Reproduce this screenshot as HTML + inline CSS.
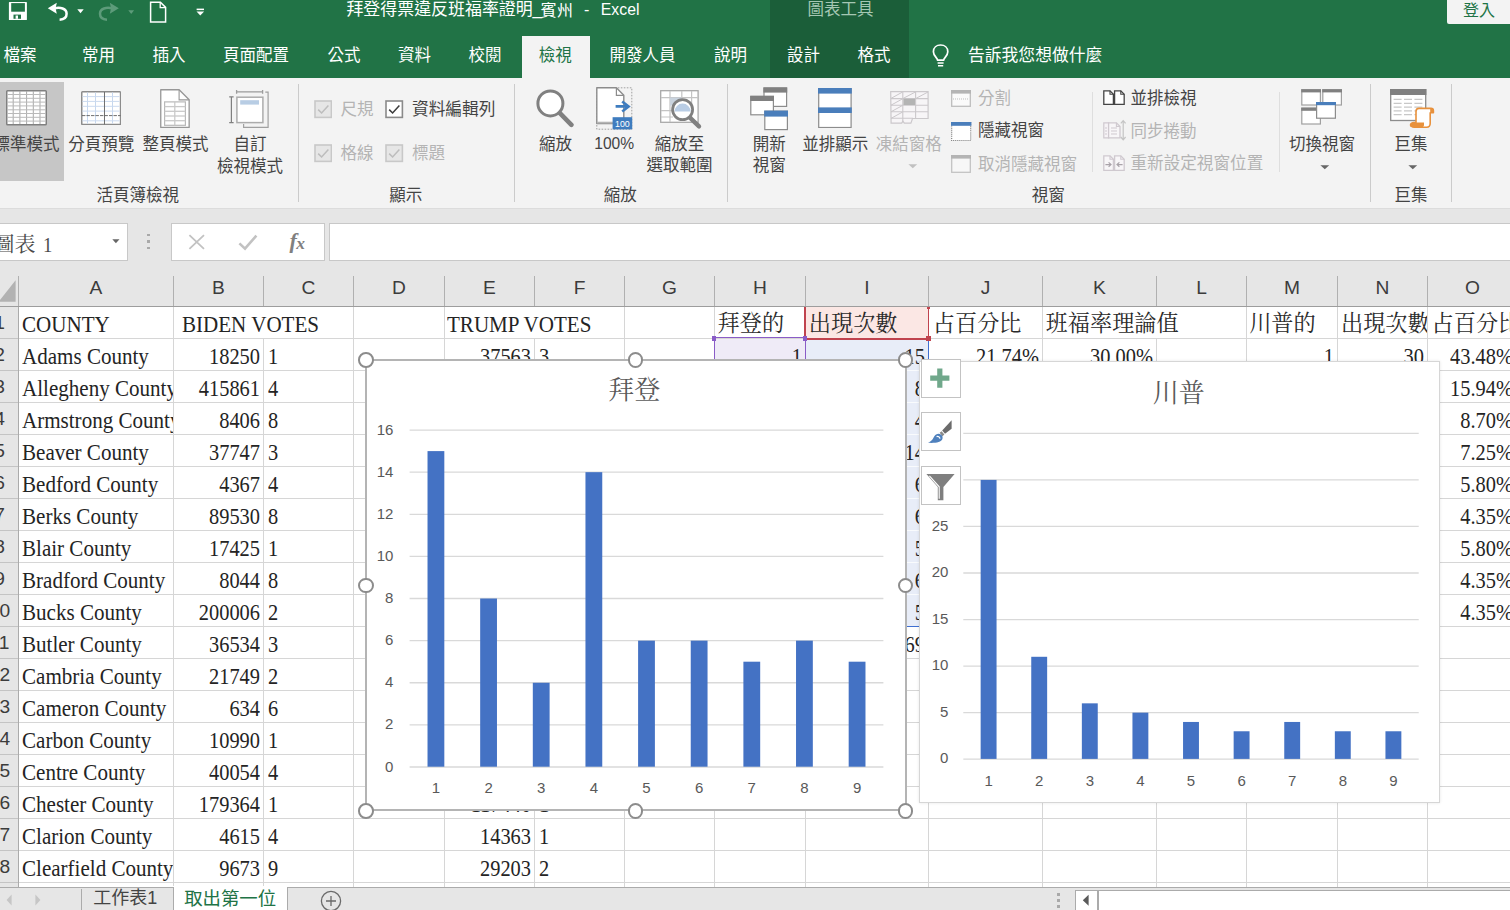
<!DOCTYPE html>
<html lang="zh-Hant"><head><meta charset="utf-8"><title>Excel</title>
<style>
html,body{margin:0;padding:0}
html{width:1510px;height:910px;overflow:hidden}
body{width:1510px;height:910px;overflow:hidden;position:relative;background:#fff;font-family:"Liberation Sans","Noto Sans CJK TC",sans-serif}
.a{position:absolute;display:block}
.t{position:absolute;white-space:nowrap}
.S{font-family:"Liberation Sans","Noto Sans CJK TC",sans-serif}
.R{font-family:"Liberation Serif","Noto Serif CJK SC",serif}
.n{display:inline-block;transform:scaleX(.877);transform-origin:0 50%}
.nd{display:inline-block;transform:scaleX(.85);transform-origin:0 50%}
.nr{display:inline-block;transform:scaleX(.85);transform-origin:100% 50%}
#w{position:absolute;left:0;top:0;width:1510px;height:910px;overflow:hidden;overflow:clip;background:#fff}
#grid{position:absolute;left:0;top:307px;width:1510px;height:580px;overflow:hidden;background:#fff}
</style></head><body>

<div id="w">
<div class="a" style="left:0px;top:0px;width:1510px;height:78px;background:#217346;"></div>
<div class="a" style="left:770px;top:0px;width:139px;height:78px;background:#1b5e39;"></div>
<div class="a" style="left:521.5px;top:36px;width:68.5px;height:42px;background:#f3f3f3;"></div>
<div class="a" style="left:1447px;top:0px;width:63px;height:24px;background:#f3f3f3;border-radius:0 0 0 2px"></div>
<div class="t S" style="left:1463px;top:1.28px;font-size:16px;line-height:19.2px;color:#217346;">登入</div>
<div class="t S" style="left:346.4px;top:0.23px;font-size:16.95px;line-height:20.34px;color:#fff;">拜登得票違反班福率證明</div>
<div class="t S" style="left:532.6px;top:0.23px;font-size:16.95px;line-height:20.34px;color:#fff;">_</div>
<div class="t S" style="left:540.6px;top:0.66px;font-size:16.2px;line-height:19.44px;color:#fff;">賓州</div>
<div class="t S" style="left:584px;top:0.28px;font-size:16px;line-height:19.2px;color:#fff;">-</div>
<div class="t S" style="left:600.8px;top:0.89px;font-size:15.8px;line-height:18.96px;color:#fff;">Excel</div>
<div class="t S" style="left:540.6px;width:600px;text-align:center;top:-0.01px;font-size:16.5px;line-height:19.8px;color:#a5c7b3;">圖表工具</div>
<div class="t S" style="left:3.5px;top:46.49px;font-size:16.5px;line-height:19.8px;color:#fff;">檔案</div>
<div class="t S" style="left:82px;top:46.49px;font-size:16.5px;line-height:19.8px;color:#fff;">常用</div>
<div class="t S" style="left:152.5px;top:46.49px;font-size:16.5px;line-height:19.8px;color:#fff;">插入</div>
<div class="t S" style="left:223px;top:46.49px;font-size:16.5px;line-height:19.8px;color:#fff;">頁面配置</div>
<div class="t S" style="left:327.5px;top:46.49px;font-size:16.5px;line-height:19.8px;color:#fff;">公式</div>
<div class="t S" style="left:398px;top:46.49px;font-size:16.5px;line-height:19.8px;color:#fff;">資料</div>
<div class="t S" style="left:468.5px;top:46.49px;font-size:16.5px;line-height:19.8px;color:#fff;">校閱</div>
<div class="t S" style="left:609.5px;top:46.49px;font-size:16.5px;line-height:19.8px;color:#fff;">開發人員</div>
<div class="t S" style="left:714px;top:46.49px;font-size:16.5px;line-height:19.8px;color:#fff;">說明</div>
<div class="t S" style="left:787px;top:46.49px;font-size:16.5px;line-height:19.8px;color:#fff;">設計</div>
<div class="t S" style="left:857.5px;top:46.49px;font-size:16.5px;line-height:19.8px;color:#fff;">格式</div>
<div class="t S" style="left:538.7px;top:46.49px;font-size:16.5px;line-height:19.8px;color:#217346;">檢視</div>
<div class="t S" style="left:968px;top:46.31px;font-size:16.8px;line-height:20.16px;color:#fff;">告訴我您想做什麼</div>
<svg class="a" style="left:8px;top:1px" width="20" height="20" viewBox="0 0 20 20"><rect x="0.9" y="1.1" width="18" height="17.9" fill="#fff" rx="0.6"/><rect x="3.2" y="2.1" width="13.7" height="8.6" fill="#217346"/><rect x="5.5" y="13.6" width="7.5" height="4.2" fill="#217346"/><rect x="7.6" y="14.5" width="2.4" height="3.3" fill="#fff"/></svg>
<svg class="a" style="left:47px;top:2px" width="24" height="20" viewBox="0 0 24 20"><path d="M0.800 6.300L9.800 0.800L8.600 6.300L9.800 11.800Z" fill="#fff"/><path d="M7.600 6.300C13 5, 19.600 6.400, 19.600 11.800C19.600 15.400, 17 17.500, 12.600 17.700" fill="none" stroke="#fff" stroke-width="2.500"/></svg>
<svg class="a" style="left:76.9px;top:9.3px" width="8" height="5" viewBox="0 0 8 5"><path d="M0.3 0.3h6.4L3.5 4.3z" fill="#fff"/></svg>
<svg class="a" style="left:97px;top:2px" width="24" height="20" viewBox="0 0 24 20"><path d="M21.800 6.300L12.800 0.800L14 6.300L12.800 11.800Z" fill="#5d9b7a"/><path d="M15 6.300C9.600 5, 3 6.400, 3 11.800C3 15.400, 5.600 17.500, 10 17.700" fill="none" stroke="#5d9b7a" stroke-width="2.500"/></svg>
<svg class="a" style="left:127.8px;top:9.5px" width="8" height="5" viewBox="0 0 8 5"><path d="M0.3 0.3h5.8L3.2 4z" fill="#5d9b7a"/></svg>
<svg class="a" style="left:149px;top:1px" width="19" height="22" viewBox="0 0 19 22"><path d="M1.6 1.2h9.8l5.2 5.2v14.6h-15z" fill="none" stroke="#fff" stroke-width="1.5"/><path d="M11.2 1.4v5.2h5.2" fill="none" stroke="#fff" stroke-width="1.3"/></svg>
<svg class="a" style="left:195.5px;top:8px" width="9" height="8" viewBox="0 0 9 8"><rect x="0.6" y="0.6" width="7.4" height="1.5" fill="#fff"/><path d="M0.5 3.6h7.6L4.3 7.4z" fill="#fff"/></svg>
<svg class="a" style="left:930px;top:43px" width="22" height="27" viewBox="0 0 22 27"><path d="M7.6 17.2 C7.2 14.6 3.4 12.8 3.4 8.8 C3.4 4.6 6.6 2 10.6 2 C14.6 2 17.8 4.6 17.8 8.8 C17.8 12.8 14 14.6 13.6 17.2 Z" fill="none" stroke="#fff" stroke-width="1.7"/><path d="M7.6 20h6M8 22.7h5.2" stroke="#fff" stroke-width="1.5" fill="none"/></svg>
<div class="a" style="left:0px;top:78px;width:1510px;height:130px;background:#f3f3f3;"></div>
<div class="a" style="left:0px;top:208px;width:1510px;height:99px;background:#e6e6e6;"></div>
<div class="a" style="left:0px;top:207.5px;width:1510px;height:1px;background:#dcdcdc;"></div>
<div class="a" style="left:297.5px;top:83.5px;width:1px;height:118.5px;background:#cbcbcb;"></div>
<div class="a" style="left:514.0px;top:83.5px;width:1px;height:118.5px;background:#cbcbcb;"></div>
<div class="a" style="left:727.0px;top:83.5px;width:1px;height:118.5px;background:#cbcbcb;"></div>
<div class="a" style="left:1369.8px;top:83.5px;width:1px;height:118.5px;background:#cbcbcb;"></div>
<div class="a" style="left:1450.8px;top:83.5px;width:1px;height:118.5px;background:#cbcbcb;"></div>
<div class="a" style="left:1092.1px;top:91.5px;width:1px;height:80px;background:#dedede;"></div>
<div class="a" style="left:1278.7px;top:91.5px;width:1px;height:80px;background:#dedede;"></div>
<div class="a" style="left:0px;top:82px;width:64px;height:99px;background:#c6c6c6;"></div>
<svg class="a" style="left:6px;top:90.2px" width="41" height="35.5" viewBox="0 0 41 35.5"><rect x="0.75" y="0.75" width="39.5" height="34" fill="#fff" stroke="#808080" stroke-width="1.5" rx="0.8"/><path d="M7.2 1v33" stroke="#a9a9a9" stroke-width="1"/><path d="M13.9 1v33" stroke="#a9a9a9" stroke-width="1"/><path d="M20.6 1v33" stroke="#a9a9a9" stroke-width="1"/><path d="M27.3 1v33" stroke="#a9a9a9" stroke-width="1"/><path d="M34.0 1v33" stroke="#a9a9a9" stroke-width="1"/><path d="M1 4.5h39" stroke="#bababa" stroke-width="1"/><path d="M1 8.3h39" stroke="#bababa" stroke-width="1"/><path d="M1 12.1h39" stroke="#bababa" stroke-width="1"/><path d="M1 15.9h39" stroke="#bababa" stroke-width="1"/><path d="M1 19.8h39" stroke="#bababa" stroke-width="1"/><path d="M1 23.5h39" stroke="#bababa" stroke-width="1"/><path d="M1 27.3h39" stroke="#bababa" stroke-width="1"/><path d="M1 31.1h39" stroke="#bababa" stroke-width="1"/></svg>
<svg class="a" style="left:81px;top:91px" width="40.3" height="34.3" viewBox="0 0 40.3 34.3"><rect x="0.75" y="0.75" width="38.8" height="32.8" fill="#fff" stroke="#8c8c8c" stroke-width="1.5" rx="0.8"/><path d="M6.5 1.5v31" stroke="#c6d7ee" stroke-width="1"/><path d="M14.5 1.5v31" stroke="#c6d7ee" stroke-width="1"/><path d="M31.5 1.5v31" stroke="#c6d7ee" stroke-width="1"/><path d="M1.5 5.6h37" stroke="#cbdaef" stroke-width="1"/><path d="M1.5 10.4h37" stroke="#cbdaef" stroke-width="1"/><path d="M1.5 15.3h37" stroke="#cbdaef" stroke-width="1"/><path d="M1.5 20.1h37" stroke="#cbdaef" stroke-width="1"/><path d="M1.5 29.8h37" stroke="#cbdaef" stroke-width="1"/><path d="M23.5 1v32.5" stroke="#6e6e6e" stroke-width="1"/><path d="M1 24.6h38.5" stroke="#5e5e5e" stroke-width="0.9" stroke-dasharray="3.4 1.1"/></svg>
<svg class="a" style="left:160px;top:88.6px" width="30.5" height="40" viewBox="0 0 30.5 40"><path d="M0.75 0.75h18.4l10 10v27.7H0.75z" fill="#fff" stroke="#979797" stroke-width="1.3" stroke-linejoin="round"/><path d="M19.1 0.9v10h10" fill="none" stroke="#979797" stroke-width="1.1"/><rect x="4.6" y="12.9" width="20.8" height="23.4" fill="#fff" stroke="#b9b9b9" stroke-width="1.2"/><path d="M14.8 13v23.4" stroke="#c6c6c6" stroke-width="1.2"/><path d="M4.6 17.6h20.8" stroke="#c9c9c9" stroke-width="1.3"/><path d="M4.6 22.3h20.8" stroke="#c9c9c9" stroke-width="1.3"/><path d="M4.6 27.0h20.8" stroke="#c9c9c9" stroke-width="1.3"/><path d="M4.6 31.7h20.8" stroke="#c9c9c9" stroke-width="1.3"/></svg>
<svg class="a" style="left:229px;top:89px" width="40" height="40" viewBox="0 0 40 40"><path d="M36.3 3.2h2.8v35.2H14.6v-3.4" fill="none" stroke="#a0a0a0" stroke-width="1.2"/><rect x="7.9" y="8.2" width="26" height="25.4" fill="#fff" stroke="#acacac" stroke-width="1.5"/><rect x="11.2" y="11.2" width="18.8" height="4.4" fill="#b8cde4"/><path d="M7.4 2.9h26.4M7.6 1v3.8M33.6 1v3.8" stroke="#9c9c9c" stroke-width="1.3" fill="none"/><path d="M2.4 7.6v26.2M0.2 7.8h4.4M0.2 33.6h4.4" stroke="#808080" stroke-width="1.2" fill="none"/></svg>
<div class="t S" style="left:-273.5px;width:600px;text-align:center;top:134.99px;font-size:16.5px;line-height:19.8px;color:#444444;">標準模式</div>
<div class="t S" style="left:-198.7px;width:600px;text-align:center;top:134.99px;font-size:16.5px;line-height:19.8px;color:#444444;">分頁預覽</div>
<div class="t S" style="left:-124.4px;width:600px;text-align:center;top:134.99px;font-size:16.5px;line-height:19.8px;color:#444444;">整頁模式</div>
<div class="t S" style="left:-50px;width:600px;text-align:center;top:134.99px;font-size:16.5px;line-height:19.8px;color:#444444;">自訂</div>
<div class="t S" style="left:-50px;width:600px;text-align:center;top:156.89px;font-size:16.5px;line-height:19.8px;color:#444444;">檢視模式</div>
<div class="t S" style="left:-162.3px;width:600px;text-align:center;top:186.29px;font-size:16.5px;line-height:19.8px;color:#444444;">活頁簿檢視</div>
<svg class="a" style="left:313.7px;top:100.3px" width="18.4" height="18.4" viewBox="0 0 18.4 18.4"><rect x="1" y="1" width="16.4" height="16.4" fill="#e6e6e6" stroke="#c8c8c8" stroke-width="1.6"/><path d="M4.2 9.6l3.4 3.4l6.8-7.6" fill="none" stroke="#bdbdbd" stroke-width="1.5"/></svg>
<svg class="a" style="left:385.3px;top:100.3px" width="18.4" height="18.4" viewBox="0 0 18.4 18.4"><rect x="1" y="1" width="16.4" height="16.4" fill="#fff" stroke="#8a8a8a" stroke-width="1.6"/><path d="M4.2 9.6l3.4 3.4l6.8-7.6" fill="none" stroke="#3b3b3b" stroke-width="1.5"/></svg>
<svg class="a" style="left:313.7px;top:144.4px" width="18.4" height="18.4" viewBox="0 0 18.4 18.4"><rect x="1" y="1" width="16.4" height="16.4" fill="#e6e6e6" stroke="#c8c8c8" stroke-width="1.6"/><path d="M4.2 9.6l3.4 3.4l6.8-7.6" fill="none" stroke="#bdbdbd" stroke-width="1.5"/></svg>
<svg class="a" style="left:385.3px;top:144.4px" width="18.4" height="18.4" viewBox="0 0 18.4 18.4"><rect x="1" y="1" width="16.4" height="16.4" fill="#e6e6e6" stroke="#c8c8c8" stroke-width="1.6"/><path d="M4.2 9.6l3.4 3.4l6.8-7.6" fill="none" stroke="#bdbdbd" stroke-width="1.5"/></svg>
<div class="t S" style="left:340.5px;top:100.09px;font-size:16.5px;line-height:19.8px;color:#b4b4b4;">尺規</div>
<div class="t S" style="left:412px;top:99.97px;font-size:16.7px;line-height:20.04px;color:#444444;">資料編輯列</div>
<div class="t S" style="left:340.5px;top:144.09px;font-size:16.5px;line-height:19.8px;color:#b4b4b4;">格線</div>
<div class="t S" style="left:412px;top:144.09px;font-size:16.5px;line-height:19.8px;color:#b4b4b4;">標題</div>
<div class="t S" style="left:105.8px;width:600px;text-align:center;top:186.29px;font-size:16.5px;line-height:19.8px;color:#444444;">顯示</div>
<svg class="a" style="left:536px;top:88.9px" width="39" height="39" viewBox="0 0 39 39"><path d="M23.4 23.6l12 12.2" stroke="#808080" stroke-width="4.6" stroke-linecap="round"/><circle cx="14.4" cy="14.4" r="12.5" fill="#fff" stroke="#808080" stroke-width="3"/></svg>
<svg class="a" style="left:596px;top:87px" width="37" height="43" viewBox="0 0 37 43"><rect x="0.8" y="0.8" width="35" height="41.4" fill="none" stroke="#a0a0a0" stroke-width="1" stroke-dasharray="1.6 1.4"/><path d="M0.8 0.8h19.6l7.4 7.4v28.3H0.8z" fill="#fff" stroke="#8c8c8c" stroke-width="1.4" stroke-linejoin="round"/><path d="M0.9 35.6h26.8" stroke="#b5b5b5" stroke-width="1.8"/><path d="M20.4 1v7.3h7.3" fill="none" stroke="#8c8c8c" stroke-width="1.2"/><path d="M19.6 19.4h11.6M26.2 14.4l6.4 5l-6.4 5" fill="none" stroke="#3e7cbf" stroke-width="2.6"/><rect x="16.6" y="30.2" width="19.6" height="12.2" fill="#3e7cbf"/><text x="26.4" y="39.9" font-family="Liberation Sans,sans-serif" font-size="8.8" fill="#fff" text-anchor="middle">100</text></svg>
<svg class="a" style="left:659.6px;top:89.6px" width="43" height="40" viewBox="0 0 43 40"><rect x="0.7" y="0.7" width="37.4" height="31.6" fill="#fff" stroke="#a8a8a8" stroke-width="1.3"/><path d="M10 1v31M21.8 1v8M31.6 1v31M1 7.6h37M1 20.6h12M1 27h12" stroke="#c4c4c4" stroke-width="1.2" fill="none"/><rect x="10" y="7.6" width="11.8" height="8" fill="#c9d3de"/><path d="M29.4 27.2l9.6 9.2" stroke="#808080" stroke-width="4.4" stroke-linecap="round"/><circle cx="22.6" cy="19.6" r="10" fill="#fff" stroke="#808080" stroke-width="2.8"/><path d="M14.6 21.6a8 8 0 0 1 16 0z" fill="#b9cde5"/></svg>
<div class="t S" style="left:255.4px;width:600px;text-align:center;top:134.69px;font-size:16.5px;line-height:19.8px;color:#444444;">縮放</div>
<div class="t S" style="left:314.2px;width:600px;text-align:center;top:135.21px;font-size:15.6px;line-height:18.72px;color:#444444;">100%</div>
<div class="t S" style="left:379.6px;width:600px;text-align:center;top:134.69px;font-size:16.5px;line-height:19.8px;color:#444444;">縮放至</div>
<div class="t S" style="left:379.6px;width:600px;text-align:center;top:156.29px;font-size:16.5px;line-height:19.8px;color:#444444;">選取範圍</div>
<div class="t S" style="left:320.2px;width:600px;text-align:center;top:186.29px;font-size:16.5px;line-height:19.8px;color:#444444;">縮放</div>
<svg class="a" style="left:749.6px;top:86.6px" width="39" height="44" viewBox="0 0 39 44"><rect x="14" y="1" width="22.6" height="18.4" fill="#fff" stroke="#8c8c8c" stroke-width="1.2"/><rect x="13.4" y="0.4" width="23.8" height="5.2" fill="#808080"/><rect x="0.8" y="9.4" width="22.6" height="18.4" fill="#fff" stroke="#8c8c8c" stroke-width="1.2"/><rect x="0.20000000000000007" y="8.8" width="23.8" height="5.2" fill="#808080"/><rect x="14.8" y="24.2" width="22.6" height="18.4" fill="#fff" stroke="#8c8c8c" stroke-width="1.2"/><rect x="14.200000000000001" y="23.599999999999998" width="23.8" height="6" fill="#4a7ebb"/></svg>
<svg class="a" style="left:818px;top:88px" width="34" height="40.4" viewBox="0 0 34 40.4"><rect x="0.7" y="0.7" width="32.4" height="38.8" fill="#fff" stroke="#8c8c8c" stroke-width="1.2"/><rect x="0" y="0" width="33.8" height="5.6" fill="#4a7ebb"/><rect x="0" y="19.4" width="33.8" height="5.6" fill="#4a7ebb"/></svg>
<svg class="a" style="left:890px;top:91.2px" width="39" height="33" viewBox="0 0 39 33"><path d="M0.7 0.7h37.4v26.8h-15.6l-1.6 4.6h-6.6l-1.4-2l-1.2 2h-10.6z" fill="#f7f5f7" stroke="#cbc8cb" stroke-width="1.2"/><path d="M12.8 1v30M25.6 1v26.5M1 7.6h37M1 14.2h37M1 20.8h37M1 27.2h22" stroke="#cbc8cb" stroke-width="1.1" fill="none"/><path d="M1 7.4l11.6-6.4M1 14.2l11.6-6.4M1 20.8l11.6-6.4M1 27.4l11.6-6.4M12.8 7.6l12.6-6.6M25.6 7.6l12.4-6.6" stroke="#cbc8cb" stroke-width="1" fill="none"/><rect x="13.4" y="7.8" width="11.6" height="6.2" fill="#b4b4b4"/></svg>
<svg class="a" style="left:907.6px;top:164.4px" width="10" height="5" viewBox="0 0 10 5"><path d="M0.4 0.3h8.8L4.8 4.3z" fill="#c0c0c0"/></svg>
<div class="t S" style="left:469.2px;width:600px;text-align:center;top:134.59px;font-size:16.5px;line-height:19.8px;color:#444444;">開新</div>
<div class="t S" style="left:469.2px;width:600px;text-align:center;top:155.59px;font-size:16.5px;line-height:19.8px;color:#444444;">視窗</div>
<div class="t S" style="left:535.3px;width:600px;text-align:center;top:134.59px;font-size:16.5px;line-height:19.8px;color:#444444;">並排顯示</div>
<div class="t S" style="left:608.8px;width:600px;text-align:center;top:134.59px;font-size:16.5px;line-height:19.8px;color:#b4b4b4;">凍結窗格</div>
<svg class="a" style="left:951.2px;top:89.8px" width="20" height="17" viewBox="0 0 20 17"><rect x="0.7" y="0.7" width="18.6" height="15.6" fill="#fafafa" stroke="#bdbdbd" stroke-width="1.3"/><rect x="0" y="0" width="20" height="3.6" fill="#b4b4b4"/><path d="M2 9h16" stroke="#bdbdbd" stroke-width="1" stroke-dasharray="1 1"/></svg>
<svg class="a" style="left:951.2px;top:121.6px" width="20.4" height="19.2" viewBox="0 0 20.4 19.2"><rect x="0.7" y="0.7" width="19" height="17.8" fill="#fff" stroke="#777" stroke-width="1.1" stroke-dasharray="1 1.05"/><rect x="0" y="0" width="20.4" height="3.8" fill="#4a7ebb"/></svg>
<svg class="a" style="left:951.2px;top:155px" width="20" height="18" viewBox="0 0 20 18"><rect x="0.7" y="0.7" width="18.6" height="16.6" fill="#f7f7f7" stroke="#c3c3c3" stroke-width="1.3"/><rect x="0" y="0" width="20" height="3.6" fill="#b4b4b4"/></svg>
<div class="t S" style="left:978px;top:88.59px;font-size:16.5px;line-height:19.8px;color:#b4b4b4;">分割</div>
<div class="t S" style="left:978px;top:121.49px;font-size:16.5px;line-height:19.8px;color:#444444;">隱藏視窗</div>
<div class="t S" style="left:978px;top:154.89px;font-size:16.5px;line-height:19.8px;color:#b4b4b4;">取消隱藏視窗</div>
<div class="t S" style="left:748.3px;width:600px;text-align:center;top:186.49px;font-size:16.5px;line-height:19.8px;color:#444444;">視窗</div>
<svg class="a" style="left:1102.8px;top:90.2px" width="22.4" height="15.4" viewBox="0 0 22.4 15.4"><path d="M0.8 0.8h6.199999999999999l3.4 3.4v10.2h-9.6z" fill="#fff" stroke="#444" stroke-width="1.3"/><path d="M7.0 0.8v3.4h3.4" fill="none" stroke="#444" stroke-width="1.1"/><path d="M11.6 0.8h6.199999999999999l3.4 3.4v10.2h-9.6z" fill="#fff" stroke="#444" stroke-width="1.3"/><path d="M17.8 0.8v3.4h3.4" fill="none" stroke="#444" stroke-width="1.1"/></svg>
<svg class="a" style="left:1102.8px;top:119.2px" width="24" height="23" viewBox="0 0 24 23"><path d="M0.8 3.8h5v15h-5z" fill="#f6f3f6" stroke="#cfc9cf" stroke-width="1.2"/><path d="M5.6 3.8h7.800000000000001l3.6 3.6v11.4h-11.4z" fill="#f8f6f8" stroke="#cfc9cf" stroke-width="1.3"/><path d="M13.4 3.8v3.6h3.6" fill="none" stroke="#cfc9cf" stroke-width="1.1"/><path d="M8 9h6M8 12h6M8 15h6M2 9h2M2 12h2M2 15h2" stroke="#cfc9cf" stroke-width="1"/><path d="M20.2 2v18.4M17.8 4.4l2.4-2.8l2.4 2.8M17.8 18l2.4 2.8l2.4-2.8" fill="none" stroke="#c4c4c4" stroke-width="1.2"/></svg>
<svg class="a" style="left:1102.8px;top:155.4px" width="22.4" height="16.6" viewBox="0 0 22.4 16.6"><path d="M0.8 0.8h6.199999999999999l3.4 3.4v11.2h-9.6z" fill="#f8f6f8" stroke="#cfc9cf" stroke-width="1.3"/><path d="M7.0 0.8v3.4h3.4" fill="none" stroke="#cfc9cf" stroke-width="1.1"/><path d="M11.6 0.8h6.199999999999999l3.4 3.4v11.2h-9.6z" fill="#f8f6f8" stroke="#cfc9cf" stroke-width="1.3"/><path d="M17.8 0.8v3.4h3.4" fill="none" stroke="#cfc9cf" stroke-width="1.1"/><path d="M2.4 9.6h5.4M5.6 7.4l2.4 2.2l-2.4 2.2M19.6 9.6h-5.4M16.4 7.4l-2.4 2.2l2.4 2.2" fill="none" stroke="#a9a3a9" stroke-width="1.2"/></svg>
<div class="t S" style="left:1130.5px;top:88.79px;font-size:16.5px;line-height:19.8px;color:#444444;">並排檢視</div>
<div class="t S" style="left:1130.5px;top:121.59px;font-size:16.5px;line-height:19.8px;color:#b4b4b4;">同步捲動</div>
<div class="t S" style="left:1130.5px;top:154.23px;font-size:16.6px;line-height:19.92px;color:#b4b4b4;">重新設定視窗位置</div>
<svg class="a" style="left:1300.6px;top:88.6px" width="42" height="37" viewBox="0 0 42 37"><rect x="0.8" y="0.8" width="18.6" height="15.2" fill="#fff" stroke="#a0a0a0" stroke-width="1.2"/><rect x="0.20000000000000007" y="0.20000000000000007" width="19.8" height="3.2" fill="#808080"/><rect x="21.8" y="0.8" width="18.6" height="15.2" fill="#fff" stroke="#a0a0a0" stroke-width="1.2"/><rect x="21.2" y="0.20000000000000007" width="19.8" height="3.2" fill="#808080"/><rect x="0.8" y="19.2" width="18.6" height="15.8" fill="#fff" stroke="#a0a0a0" stroke-width="1.2"/><rect x="0.20000000000000007" y="18.599999999999998" width="19.8" height="3.2" fill="#808080"/><rect x="15.6" y="13.6" width="18.8" height="15.6" fill="#fff" stroke="#8c8c8c" stroke-width="1.2"/><rect x="15.0" y="13.0" width="20.0" height="3.2" fill="#4a7ebb"/></svg>
<div class="t S" style="left:1022px;width:600px;text-align:center;top:134.69px;font-size:16.5px;line-height:19.8px;color:#444444;">切換視窗</div>
<svg class="a" style="left:1320.2px;top:164.6px" width="10" height="5" viewBox="0 0 10 5"><path d="M0.4 0.3h8.8L4.8 4.3z" fill="#666"/></svg>
<svg class="a" style="left:1389.6px;top:88.7px" width="45" height="40" viewBox="0 0 45 40"><rect x="0.7" y="0.7" width="35" height="30.8" fill="#fff" stroke="#8c8c8c" stroke-width="1.3"/><rect x="0" y="0" width="36.4" height="6" fill="#808080"/><path d="M3.6 10.4h8M14 10.4h8M24.4 10.4h8" stroke="#c8c8c8" stroke-width="1.2"/><path d="M3.6 14.4h8M14 14.4h8M24.4 14.4h8" stroke="#c8c8c8" stroke-width="1.2"/><path d="M3.6 18.2h8M14 18.2h8M24.4 18.2h8" stroke="#c8c8c8" stroke-width="1.2"/><path d="M3.6 21.8h8M14 21.8h8M24.4 21.8h8" stroke="#c8c8c8" stroke-width="1.2"/><path d="M3.6 25.6h8M14 25.6h8M24.4 25.6h8" stroke="#c8c8c8" stroke-width="1.2"/><path d="M26 22.4c0-2 1-3 3-3h12c1.6 0 2.4 1 2.4 2.4v2h-3.2v10.400c0 2.400-1.2 4-3.600 4h-12.400c-1.800 0-2.600-1-2.600-2.400c0-1.400 0.800-2.200 2.200-2.200h2.200z" fill="#fff" stroke="#e8913c" stroke-width="1.6" stroke-linejoin="round"/><path d="M22.200 33.600h11.800v2.200c0 1.400-0.600 2.400-2 2.400h-9.800c-1.600 0-2.400-1-2.400-2.300c0-1.300 0.800-2.300 2.400-2.300z" fill="#e8913c"/><path d="M40.200 19.400h1c1.400 0 2.200 1 2.200 2.400v2h-3.200z" fill="#e8913c"/></svg>
<div class="t S" style="left:1111px;width:600px;text-align:center;top:134.69px;font-size:16.5px;line-height:19.8px;color:#444444;">巨集</div>
<svg class="a" style="left:1408px;top:164.6px" width="10" height="5" viewBox="0 0 10 5"><path d="M0.4 0.3h8.8L4.8 4.3z" fill="#666"/></svg>
<div class="t S" style="left:1111px;width:600px;text-align:center;top:186.49px;font-size:16.5px;line-height:19.8px;color:#444444;">巨集</div>
<div class="a" style="left:-2px;top:223px;width:129.5px;height:37.5px;background:#fff;box-sizing:border-box;border:1px solid #c8c8c8"></div>
<div class="t R" style="left:-6.4px;top:232.29px;font-size:21px;line-height:25.2px;color:#4a4a4a;">圖表</div>
<div class="t R" style="left:43px;top:231.72px;font-size:22px;line-height:26.4px;color:#4a4a4a;transform:scaleX(.85);transform-origin:0 50%">1</div>
<svg class="a" style="left:112.4px;top:238.6px" width="8" height="5" viewBox="0 0 8 5"><path d="M0.3 0.3h7.2L3.9 4.2z" fill="#666"/></svg>
<div class="a" style="left:147.4px;top:234.2px;width:2.2px;height:2.2px;background:#a9a9a9;"></div>
<div class="a" style="left:147.4px;top:240.4px;width:2.2px;height:2.2px;background:#a9a9a9;"></div>
<div class="a" style="left:147.4px;top:246.6px;width:2.2px;height:2.2px;background:#a9a9a9;"></div>
<div class="a" style="left:171px;top:223px;width:154px;height:37.5px;background:#fff;box-sizing:border-box;border:1px solid #c8c8c8"></div>
<div class="a" style="left:329.3px;top:223px;width:1190px;height:37.5px;background:#fff;box-sizing:border-box;border:1px solid #c8c8c8"></div>
<svg class="a" style="left:187.6px;top:234.2px" width="18" height="16" viewBox="0 0 18 16"><path d="M1.4 1.2l14.600 13.600M16 1.2l-14.600 13.600" stroke="#c2c2c2" stroke-width="1.8" fill="none"/></svg>
<svg class="a" style="left:238.4px;top:233.6px" width="20" height="17" viewBox="0 0 20 17"><path d="M1.4 9.4l5.600 5.200l11.400-13" stroke="#c2c2c2" stroke-width="2.6" fill="none"/></svg>
<div class="t R" style="left:289.6px;top:228.12px;font-size:22px;line-height:26.4px;color:#808080;font-style:italic;font-weight:bold">f</div>
<div class="t R" style="left:296.2px;top:233.31px;font-size:17.5px;line-height:21.0px;color:#808080;font-style:italic;font-weight:bold">x</div>
<div class="t S" style="left:-204.0px;width:600px;text-align:center;top:276.13px;font-size:19.2px;line-height:23.04px;color:#3c3c3c;">A</div>
<div class="t S" style="left:-81.5px;width:600px;text-align:center;top:276.13px;font-size:19.2px;line-height:23.04px;color:#3c3c3c;">B</div>
<div class="t S" style="left:8.5px;width:600px;text-align:center;top:276.13px;font-size:19.2px;line-height:23.04px;color:#3c3c3c;">C</div>
<div class="t S" style="left:99.0px;width:600px;text-align:center;top:276.13px;font-size:19.2px;line-height:23.04px;color:#3c3c3c;">D</div>
<div class="t S" style="left:189.5px;width:600px;text-align:center;top:276.13px;font-size:19.2px;line-height:23.04px;color:#3c3c3c;">E</div>
<div class="t S" style="left:279.5px;width:600px;text-align:center;top:276.13px;font-size:19.2px;line-height:23.04px;color:#3c3c3c;">F</div>
<div class="t S" style="left:369.5px;width:600px;text-align:center;top:276.13px;font-size:19.2px;line-height:23.04px;color:#3c3c3c;">G</div>
<div class="t S" style="left:460.0px;width:600px;text-align:center;top:276.13px;font-size:19.2px;line-height:23.04px;color:#3c3c3c;">H</div>
<div class="t S" style="left:567.0px;width:600px;text-align:center;top:276.13px;font-size:19.2px;line-height:23.04px;color:#3c3c3c;">I</div>
<div class="t S" style="left:685.5px;width:600px;text-align:center;top:276.13px;font-size:19.2px;line-height:23.04px;color:#3c3c3c;">J</div>
<div class="t S" style="left:799.5px;width:600px;text-align:center;top:276.13px;font-size:19.2px;line-height:23.04px;color:#3c3c3c;">K</div>
<div class="t S" style="left:901.5px;width:600px;text-align:center;top:276.13px;font-size:19.2px;line-height:23.04px;color:#3c3c3c;">L</div>
<div class="t S" style="left:992.0px;width:600px;text-align:center;top:276.13px;font-size:19.2px;line-height:23.04px;color:#3c3c3c;">M</div>
<div class="t S" style="left:1082.5px;width:600px;text-align:center;top:276.13px;font-size:19.2px;line-height:23.04px;color:#3c3c3c;">N</div>
<div class="t S" style="left:1172.5px;width:600px;text-align:center;top:276.13px;font-size:19.2px;line-height:23.04px;color:#3c3c3c;">O</div>
<div class="a" style="left:18px;top:276px;width:1px;height:30px;background:#b0b0b0;"></div>
<div class="a" style="left:173px;top:276px;width:1px;height:30px;background:#b0b0b0;"></div>
<div class="a" style="left:263px;top:276px;width:1px;height:30px;background:#b0b0b0;"></div>
<div class="a" style="left:353px;top:276px;width:1px;height:30px;background:#b0b0b0;"></div>
<div class="a" style="left:444px;top:276px;width:1px;height:30px;background:#b0b0b0;"></div>
<div class="a" style="left:534px;top:276px;width:1px;height:30px;background:#b0b0b0;"></div>
<div class="a" style="left:624px;top:276px;width:1px;height:30px;background:#b0b0b0;"></div>
<div class="a" style="left:714px;top:276px;width:1px;height:30px;background:#b0b0b0;"></div>
<div class="a" style="left:805px;top:276px;width:1px;height:30px;background:#b0b0b0;"></div>
<div class="a" style="left:928px;top:276px;width:1px;height:30px;background:#b0b0b0;"></div>
<div class="a" style="left:1042px;top:276px;width:1px;height:30px;background:#b0b0b0;"></div>
<div class="a" style="left:1156px;top:276px;width:1px;height:30px;background:#b0b0b0;"></div>
<div class="a" style="left:1246px;top:276px;width:1px;height:30px;background:#b0b0b0;"></div>
<div class="a" style="left:1337px;top:276px;width:1px;height:30px;background:#b0b0b0;"></div>
<div class="a" style="left:1427px;top:276px;width:1px;height:30px;background:#b0b0b0;"></div>
<div class="a" style="left:0px;top:306px;width:1510px;height:1px;background:#9d9d9d;"></div>
<svg class="a" style="left:0px;top:279px" width="18" height="26" viewBox="0 0 18 26"><path d="M15.600 1.200v21.600h-17z" fill="#b2b2b2"/></svg>
<div id="grid">
<div class="a" style="left:0px;top:0px;width:18px;height:580px;background:#e6e6e6;"></div>
<div class="a" style="left:18px;top:0px;width:1px;height:580px;background:#ababab;"></div>
<div class="a" style="left:19px;top:31px;width:1500px;height:1px;background:#d6d6d6;"></div>
<div class="a" style="left:0px;top:31px;width:18px;height:1px;background:#c4c4c4;"></div>
<div class="a" style="left:19px;top:63px;width:1500px;height:1px;background:#d6d6d6;"></div>
<div class="a" style="left:0px;top:63px;width:18px;height:1px;background:#c4c4c4;"></div>
<div class="a" style="left:19px;top:95px;width:1500px;height:1px;background:#d6d6d6;"></div>
<div class="a" style="left:0px;top:95px;width:18px;height:1px;background:#c4c4c4;"></div>
<div class="a" style="left:19px;top:127px;width:1500px;height:1px;background:#d6d6d6;"></div>
<div class="a" style="left:0px;top:127px;width:18px;height:1px;background:#c4c4c4;"></div>
<div class="a" style="left:19px;top:159px;width:1500px;height:1px;background:#d6d6d6;"></div>
<div class="a" style="left:0px;top:159px;width:18px;height:1px;background:#c4c4c4;"></div>
<div class="a" style="left:19px;top:191px;width:1500px;height:1px;background:#d6d6d6;"></div>
<div class="a" style="left:0px;top:191px;width:18px;height:1px;background:#c4c4c4;"></div>
<div class="a" style="left:19px;top:223px;width:1500px;height:1px;background:#d6d6d6;"></div>
<div class="a" style="left:0px;top:223px;width:18px;height:1px;background:#c4c4c4;"></div>
<div class="a" style="left:19px;top:255px;width:1500px;height:1px;background:#d6d6d6;"></div>
<div class="a" style="left:0px;top:255px;width:18px;height:1px;background:#c4c4c4;"></div>
<div class="a" style="left:19px;top:287px;width:1500px;height:1px;background:#d6d6d6;"></div>
<div class="a" style="left:0px;top:287px;width:18px;height:1px;background:#c4c4c4;"></div>
<div class="a" style="left:19px;top:319px;width:1500px;height:1px;background:#d6d6d6;"></div>
<div class="a" style="left:0px;top:319px;width:18px;height:1px;background:#c4c4c4;"></div>
<div class="a" style="left:19px;top:351px;width:1500px;height:1px;background:#d6d6d6;"></div>
<div class="a" style="left:0px;top:351px;width:18px;height:1px;background:#c4c4c4;"></div>
<div class="a" style="left:19px;top:383px;width:1500px;height:1px;background:#d6d6d6;"></div>
<div class="a" style="left:0px;top:383px;width:18px;height:1px;background:#c4c4c4;"></div>
<div class="a" style="left:19px;top:415px;width:1500px;height:1px;background:#d6d6d6;"></div>
<div class="a" style="left:0px;top:415px;width:18px;height:1px;background:#c4c4c4;"></div>
<div class="a" style="left:19px;top:447px;width:1500px;height:1px;background:#d6d6d6;"></div>
<div class="a" style="left:0px;top:447px;width:18px;height:1px;background:#c4c4c4;"></div>
<div class="a" style="left:19px;top:479px;width:1500px;height:1px;background:#d6d6d6;"></div>
<div class="a" style="left:0px;top:479px;width:18px;height:1px;background:#c4c4c4;"></div>
<div class="a" style="left:19px;top:511px;width:1500px;height:1px;background:#d6d6d6;"></div>
<div class="a" style="left:0px;top:511px;width:18px;height:1px;background:#c4c4c4;"></div>
<div class="a" style="left:19px;top:543px;width:1500px;height:1px;background:#d6d6d6;"></div>
<div class="a" style="left:0px;top:543px;width:18px;height:1px;background:#c4c4c4;"></div>
<div class="a" style="left:19px;top:575px;width:1500px;height:1px;background:#d6d6d6;"></div>
<div class="a" style="left:0px;top:575px;width:18px;height:1px;background:#c4c4c4;"></div>
<div class="a" style="left:173px;top:0px;width:1px;height:580px;background:#d6d6d6;"></div>
<div class="a" style="left:263px;top:0px;width:1px;height:580px;background:#d6d6d6;"></div>
<div class="a" style="left:353px;top:0px;width:1px;height:580px;background:#d6d6d6;"></div>
<div class="a" style="left:444px;top:0px;width:1px;height:580px;background:#d6d6d6;"></div>
<div class="a" style="left:534px;top:0px;width:1px;height:580px;background:#d6d6d6;"></div>
<div class="a" style="left:624px;top:0px;width:1px;height:580px;background:#d6d6d6;"></div>
<div class="a" style="left:714px;top:0px;width:1px;height:580px;background:#d6d6d6;"></div>
<div class="a" style="left:805px;top:0px;width:1px;height:580px;background:#d6d6d6;"></div>
<div class="a" style="left:928px;top:0px;width:1px;height:580px;background:#d6d6d6;"></div>
<div class="a" style="left:1042px;top:0px;width:1px;height:580px;background:#d6d6d6;"></div>
<div class="a" style="left:1156px;top:0px;width:1px;height:580px;background:#d6d6d6;"></div>
<div class="a" style="left:1246px;top:0px;width:1px;height:580px;background:#d6d6d6;"></div>
<div class="a" style="left:1337px;top:0px;width:1px;height:580px;background:#d6d6d6;"></div>
<div class="a" style="left:1427px;top:0px;width:1px;height:580px;background:#d6d6d6;"></div>
<div class="a" style="left:263px;top:0px;width:1px;height:31px;background:#fff;"></div>
<div class="a" style="left:534px;top:0px;width:1px;height:31px;background:#fff;"></div>
<div class="a" style="left:1156px;top:0px;width:1px;height:31px;background:#fff;"></div>
<div class="a" style="left:806px;top:0px;width:122px;height:31px;background:#fbe7e4;"></div>
<div class="a" style="left:715px;top:32px;width:90px;height:287px;background:#efebf7;"></div>
<div class="a" style="left:806px;top:32px;width:122px;height:287px;background:#e8edf8;"></div>
<div class="a" style="left:715px;top:63px;width:213px;height:1px;background:rgba(255,255,255,.75);"></div>
<div class="a" style="left:715px;top:95px;width:213px;height:1px;background:rgba(255,255,255,.75);"></div>
<div class="a" style="left:715px;top:127px;width:213px;height:1px;background:rgba(255,255,255,.75);"></div>
<div class="a" style="left:715px;top:159px;width:213px;height:1px;background:rgba(255,255,255,.75);"></div>
<div class="a" style="left:715px;top:191px;width:213px;height:1px;background:rgba(255,255,255,.75);"></div>
<div class="a" style="left:715px;top:223px;width:213px;height:1px;background:rgba(255,255,255,.75);"></div>
<div class="a" style="left:715px;top:255px;width:213px;height:1px;background:rgba(255,255,255,.75);"></div>
<div class="a" style="left:715px;top:287px;width:213px;height:1px;background:rgba(255,255,255,.75);"></div>
<div class="a" style="left:805px;top:32px;width:1px;height:287px;background:rgba(255,255,255,.6);"></div>
<div class="a" style="left:804.2px;top:0px;width:1.4px;height:31px;background:#c0434e;"></div>
<div class="a" style="left:927.8px;top:0px;width:1.4px;height:31px;background:#c0434e;"></div>
<div class="a" style="left:803.6px;top:0px;width:2.6px;height:1.6px;background:#c0434e;"></div>
<div class="a" style="left:927.2px;top:0px;width:2.6px;height:1.6px;background:#c0434e;"></div>
<div class="a" style="left:714px;top:30.2px;width:91.8px;height:289.6px;background:transparent;box-sizing:border-box;border:1.6px solid #8a5cc7"></div>
<div class="a" style="left:806px;top:31.6px;width:123.4px;height:288.2px;background:transparent;box-sizing:border-box;border:1.6px solid #3f6fd1;border-top:0;border-left:0"></div>
<div class="a" style="left:807px;top:30.8px;width:120px;height:1.8px;background:#c0434e;"></div>
<div class="a" style="left:711.6px;top:28.8px;width:4.8px;height:4.8px;background:#8a5cc7;"></div>
<div class="a" style="left:802.6px;top:29px;width:4.8px;height:4.8px;background:#8a5cc7;"></div>
<div class="a" style="left:926.2px;top:29px;width:4.8px;height:4.8px;background:#c0434e;"></div>
<div class="t S" style="left:-30.5px;width:60px;text-align:center;top:4.43px;font-size:19.2px;line-height:23px;color:#3c3c3c">1</div>
<div class="t S" style="left:-30.5px;width:60px;text-align:center;top:36.43px;font-size:19.2px;line-height:23px;color:#3c3c3c">2</div>
<div class="t S" style="left:-30.5px;width:60px;text-align:center;top:68.43px;font-size:19.2px;line-height:23px;color:#3c3c3c">3</div>
<div class="t S" style="left:-30.5px;width:60px;text-align:center;top:100.43px;font-size:19.2px;line-height:23px;color:#3c3c3c">4</div>
<div class="t S" style="left:-30.5px;width:60px;text-align:center;top:132.43px;font-size:19.2px;line-height:23px;color:#3c3c3c">5</div>
<div class="t S" style="left:-30.5px;width:60px;text-align:center;top:164.43px;font-size:19.2px;line-height:23px;color:#3c3c3c">6</div>
<div class="t S" style="left:-30.5px;width:60px;text-align:center;top:196.43px;font-size:19.2px;line-height:23px;color:#3c3c3c">7</div>
<div class="t S" style="left:-30.5px;width:60px;text-align:center;top:228.43px;font-size:19.2px;line-height:23px;color:#3c3c3c">8</div>
<div class="t S" style="left:-30.5px;width:60px;text-align:center;top:260.43px;font-size:19.2px;line-height:23px;color:#3c3c3c">9</div>
<div class="t S" style="left:-30.5px;width:60px;text-align:center;top:292.43px;font-size:19.2px;line-height:23px;color:#3c3c3c">10</div>
<div class="t S" style="left:-30.5px;width:60px;text-align:center;top:324.43px;font-size:19.2px;line-height:23px;color:#3c3c3c">11</div>
<div class="t S" style="left:-30.5px;width:60px;text-align:center;top:356.43px;font-size:19.2px;line-height:23px;color:#3c3c3c">12</div>
<div class="t S" style="left:-30.5px;width:60px;text-align:center;top:388.43px;font-size:19.2px;line-height:23px;color:#3c3c3c">13</div>
<div class="t S" style="left:-30.5px;width:60px;text-align:center;top:420.43px;font-size:19.2px;line-height:23px;color:#3c3c3c">14</div>
<div class="t S" style="left:-30.5px;width:60px;text-align:center;top:452.43px;font-size:19.2px;line-height:23px;color:#3c3c3c">15</div>
<div class="t S" style="left:-30.5px;width:60px;text-align:center;top:484.43px;font-size:19.2px;line-height:23px;color:#3c3c3c">16</div>
<div class="t S" style="left:-30.5px;width:60px;text-align:center;top:516.43px;font-size:19.2px;line-height:23px;color:#3c3c3c">17</div>
<div class="t S" style="left:-30.5px;width:60px;text-align:center;top:548.43px;font-size:19.2px;line-height:23px;color:#3c3c3c">18</div>
<div class="t R" style="left:22.2px;top:3.2px;width:200px;overflow:hidden;font-size:24px;line-height:28.8px;color:#242424"><span class="n">COUNTY</span></div>
<div class="t R" style="left:22.2px;top:35.2px;width:150.4px;overflow:hidden;font-size:24px;line-height:28.8px;color:#242424"><span class="n">Adams County</span></div>
<div class="t R" style="left:-139.6px;width:400px;text-align:right;top:35.2px;font-size:24px;line-height:28.8px;color:#242424"><span class="nr">18250</span></div>
<div class="t R" style="left:268.2px;top:35.2px;font-size:24px;line-height:28.8px;color:#242424"><span class="nd">1</span></div>
<div class="t R" style="left:22.2px;top:67.2px;width:150.4px;overflow:hidden;font-size:24px;line-height:28.8px;color:#242424"><span class="n">Allegheny County</span></div>
<div class="t R" style="left:-139.6px;width:400px;text-align:right;top:67.2px;font-size:24px;line-height:28.8px;color:#242424"><span class="nr">415861</span></div>
<div class="t R" style="left:268.2px;top:67.2px;font-size:24px;line-height:28.8px;color:#242424"><span class="nd">4</span></div>
<div class="t R" style="left:22.2px;top:99.2px;width:150.4px;overflow:hidden;font-size:24px;line-height:28.8px;color:#242424"><span class="n">Armstrong County</span></div>
<div class="t R" style="left:-139.6px;width:400px;text-align:right;top:99.2px;font-size:24px;line-height:28.8px;color:#242424"><span class="nr">8406</span></div>
<div class="t R" style="left:268.2px;top:99.2px;font-size:24px;line-height:28.8px;color:#242424"><span class="nd">8</span></div>
<div class="t R" style="left:22.2px;top:131.2px;width:150.4px;overflow:hidden;font-size:24px;line-height:28.8px;color:#242424"><span class="n">Beaver County</span></div>
<div class="t R" style="left:-139.6px;width:400px;text-align:right;top:131.2px;font-size:24px;line-height:28.8px;color:#242424"><span class="nr">37747</span></div>
<div class="t R" style="left:268.2px;top:131.2px;font-size:24px;line-height:28.8px;color:#242424"><span class="nd">3</span></div>
<div class="t R" style="left:22.2px;top:163.2px;width:150.4px;overflow:hidden;font-size:24px;line-height:28.8px;color:#242424"><span class="n">Bedford County</span></div>
<div class="t R" style="left:-139.6px;width:400px;text-align:right;top:163.2px;font-size:24px;line-height:28.8px;color:#242424"><span class="nr">4367</span></div>
<div class="t R" style="left:268.2px;top:163.2px;font-size:24px;line-height:28.8px;color:#242424"><span class="nd">4</span></div>
<div class="t R" style="left:22.2px;top:195.2px;width:150.4px;overflow:hidden;font-size:24px;line-height:28.8px;color:#242424"><span class="n">Berks County</span></div>
<div class="t R" style="left:-139.6px;width:400px;text-align:right;top:195.2px;font-size:24px;line-height:28.8px;color:#242424"><span class="nr">89530</span></div>
<div class="t R" style="left:268.2px;top:195.2px;font-size:24px;line-height:28.8px;color:#242424"><span class="nd">8</span></div>
<div class="t R" style="left:22.2px;top:227.2px;width:150.4px;overflow:hidden;font-size:24px;line-height:28.8px;color:#242424"><span class="n">Blair County</span></div>
<div class="t R" style="left:-139.6px;width:400px;text-align:right;top:227.2px;font-size:24px;line-height:28.8px;color:#242424"><span class="nr">17425</span></div>
<div class="t R" style="left:268.2px;top:227.2px;font-size:24px;line-height:28.8px;color:#242424"><span class="nd">1</span></div>
<div class="t R" style="left:22.2px;top:259.2px;width:150.4px;overflow:hidden;font-size:24px;line-height:28.8px;color:#242424"><span class="n">Bradford County</span></div>
<div class="t R" style="left:-139.6px;width:400px;text-align:right;top:259.2px;font-size:24px;line-height:28.8px;color:#242424"><span class="nr">8044</span></div>
<div class="t R" style="left:268.2px;top:259.2px;font-size:24px;line-height:28.8px;color:#242424"><span class="nd">8</span></div>
<div class="t R" style="left:22.2px;top:291.2px;width:150.4px;overflow:hidden;font-size:24px;line-height:28.8px;color:#242424"><span class="n">Bucks County</span></div>
<div class="t R" style="left:-139.6px;width:400px;text-align:right;top:291.2px;font-size:24px;line-height:28.8px;color:#242424"><span class="nr">200006</span></div>
<div class="t R" style="left:268.2px;top:291.2px;font-size:24px;line-height:28.8px;color:#242424"><span class="nd">2</span></div>
<div class="t R" style="left:22.2px;top:323.2px;width:150.4px;overflow:hidden;font-size:24px;line-height:28.8px;color:#242424"><span class="n">Butler County</span></div>
<div class="t R" style="left:-139.6px;width:400px;text-align:right;top:323.2px;font-size:24px;line-height:28.8px;color:#242424"><span class="nr">36534</span></div>
<div class="t R" style="left:268.2px;top:323.2px;font-size:24px;line-height:28.8px;color:#242424"><span class="nd">3</span></div>
<div class="t R" style="left:22.2px;top:355.2px;width:150.4px;overflow:hidden;font-size:24px;line-height:28.8px;color:#242424"><span class="n">Cambria County</span></div>
<div class="t R" style="left:-139.6px;width:400px;text-align:right;top:355.2px;font-size:24px;line-height:28.8px;color:#242424"><span class="nr">21749</span></div>
<div class="t R" style="left:268.2px;top:355.2px;font-size:24px;line-height:28.8px;color:#242424"><span class="nd">2</span></div>
<div class="t R" style="left:22.2px;top:387.2px;width:150.4px;overflow:hidden;font-size:24px;line-height:28.8px;color:#242424"><span class="n">Cameron County</span></div>
<div class="t R" style="left:-139.6px;width:400px;text-align:right;top:387.2px;font-size:24px;line-height:28.8px;color:#242424"><span class="nr">634</span></div>
<div class="t R" style="left:268.2px;top:387.2px;font-size:24px;line-height:28.8px;color:#242424"><span class="nd">6</span></div>
<div class="t R" style="left:22.2px;top:419.2px;width:150.4px;overflow:hidden;font-size:24px;line-height:28.8px;color:#242424"><span class="n">Carbon County</span></div>
<div class="t R" style="left:-139.6px;width:400px;text-align:right;top:419.2px;font-size:24px;line-height:28.8px;color:#242424"><span class="nr">10990</span></div>
<div class="t R" style="left:268.2px;top:419.2px;font-size:24px;line-height:28.8px;color:#242424"><span class="nd">1</span></div>
<div class="t R" style="left:22.2px;top:451.2px;width:150.4px;overflow:hidden;font-size:24px;line-height:28.8px;color:#242424"><span class="n">Centre County</span></div>
<div class="t R" style="left:-139.6px;width:400px;text-align:right;top:451.2px;font-size:24px;line-height:28.8px;color:#242424"><span class="nr">40054</span></div>
<div class="t R" style="left:268.2px;top:451.2px;font-size:24px;line-height:28.8px;color:#242424"><span class="nd">4</span></div>
<div class="t R" style="left:22.2px;top:483.2px;width:150.4px;overflow:hidden;font-size:24px;line-height:28.8px;color:#242424"><span class="n">Chester County</span></div>
<div class="t R" style="left:-139.6px;width:400px;text-align:right;top:483.2px;font-size:24px;line-height:28.8px;color:#242424"><span class="nr">179364</span></div>
<div class="t R" style="left:268.2px;top:483.2px;font-size:24px;line-height:28.8px;color:#242424"><span class="nd">1</span></div>
<div class="t R" style="left:22.2px;top:515.2px;width:150.4px;overflow:hidden;font-size:24px;line-height:28.8px;color:#242424"><span class="n">Clarion County</span></div>
<div class="t R" style="left:-139.6px;width:400px;text-align:right;top:515.2px;font-size:24px;line-height:28.8px;color:#242424"><span class="nr">4615</span></div>
<div class="t R" style="left:268.2px;top:515.2px;font-size:24px;line-height:28.8px;color:#242424"><span class="nd">4</span></div>
<div class="t R" style="left:22.2px;top:547.2px;width:150.4px;overflow:hidden;font-size:24px;line-height:28.8px;color:#242424"><span class="n">Clearfield County</span></div>
<div class="t R" style="left:-139.6px;width:400px;text-align:right;top:547.2px;font-size:24px;line-height:28.8px;color:#242424"><span class="nr">9673</span></div>
<div class="t R" style="left:268.2px;top:547.2px;font-size:24px;line-height:28.8px;color:#242424"><span class="nd">9</span></div>
<div class="t R" style="left:182.4px;top:3.2px;font-size:24px;line-height:28.8px;color:#242424"><span class="n">BIDEN VOTES</span></div>
<div class="t R" style="left:446.6px;top:3.2px;font-size:24px;line-height:28.8px;color:#242424"><span class="n">TRUMP VOTES</span></div>
<div class="t R" style="left:131px;width:400px;text-align:right;top:35.2px;font-size:24px;line-height:28.8px;color:#242424"><span class="nr">37563</span></div>
<div class="t R" style="left:538.8px;top:35.2px;font-size:24px;line-height:28.8px;color:#242424"><span class="nd">3</span></div>
<div class="t R" style="left:131px;width:400px;text-align:right;top:483.2px;font-size:24px;line-height:28.8px;color:#242424"><span class="nr">117440</span></div>
<div class="t R" style="left:538.8px;top:483.2px;font-size:24px;line-height:28.8px;color:#242424"><span class="nd">1</span></div>
<div class="t R" style="left:131px;width:400px;text-align:right;top:515.2px;font-size:24px;line-height:28.8px;color:#242424"><span class="nr">14363</span></div>
<div class="t R" style="left:538.8px;top:515.2px;font-size:24px;line-height:28.8px;color:#242424"><span class="nd">1</span></div>
<div class="t R" style="left:131px;width:400px;text-align:right;top:547.2px;font-size:24px;line-height:28.8px;color:#242424"><span class="nr">29203</span></div>
<div class="t R" style="left:538.8px;top:547.2px;font-size:24px;line-height:28.8px;color:#242424"><span class="nd">2</span></div>
<div class="t R" style="left:717.6px;top:4.39px;font-size:22.2px;line-height:26.6px;color:#2a2a2a;">拜登的</div>
<div class="t R" style="left:808.8px;top:4.39px;font-size:22.2px;line-height:26.6px;color:#2a2a2a;">出現次數</div>
<div class="t R" style="left:932.8px;top:4.39px;font-size:22.2px;line-height:26.6px;color:#2a2a2a;">占百分比</div>
<div class="t R" style="left:1045.6px;top:4.39px;font-size:22.2px;line-height:26.6px;color:#2a2a2a;">班福率理論值</div>
<div class="t R" style="left:1249.2px;top:4.39px;font-size:22.2px;line-height:26.6px;color:#2a2a2a;">川普的</div>
<div class="t R" style="left:1341px;top:4.39px;font-size:22.2px;line-height:26.6px;color:#2a2a2a;width:86px;overflow:hidden;">出現次數</div>
<div class="t R" style="left:1431.6px;top:4.39px;font-size:22.2px;line-height:26.6px;color:#2a2a2a;">占百分比</div>
<div class="t R" style="left:402px;width:400px;text-align:right;top:35.2px;font-size:24px;line-height:28.8px;color:#242424"><span class="nr">1</span></div>
<div class="t R" style="left:525px;width:400px;text-align:right;top:35.2px;font-size:24px;line-height:28.8px;color:#242424"><span class="nr">15</span></div>
<div class="t R" style="left:525px;width:400px;text-align:right;top:67.2px;font-size:24px;line-height:28.8px;color:#242424"><span class="nr">8</span></div>
<div class="t R" style="left:525px;width:400px;text-align:right;top:99.2px;font-size:24px;line-height:28.8px;color:#242424"><span class="nr">4</span></div>
<div class="t R" style="left:525px;width:400px;text-align:right;top:131.2px;font-size:24px;line-height:28.8px;color:#242424"><span class="nr">14</span></div>
<div class="t R" style="left:525px;width:400px;text-align:right;top:163.2px;font-size:24px;line-height:28.8px;color:#242424"><span class="nr">6</span></div>
<div class="t R" style="left:525px;width:400px;text-align:right;top:195.2px;font-size:24px;line-height:28.8px;color:#242424"><span class="nr">6</span></div>
<div class="t R" style="left:525px;width:400px;text-align:right;top:227.2px;font-size:24px;line-height:28.8px;color:#242424"><span class="nr">5</span></div>
<div class="t R" style="left:525px;width:400px;text-align:right;top:259.2px;font-size:24px;line-height:28.8px;color:#242424"><span class="nr">6</span></div>
<div class="t R" style="left:525px;width:400px;text-align:right;top:291.2px;font-size:24px;line-height:28.8px;color:#242424"><span class="nr">5</span></div>
<div class="t R" style="left:525px;width:400px;text-align:right;top:323.2px;font-size:24px;line-height:28.8px;color:#242424"><span class="nr">69</span></div>
<div class="t R" style="left:638.6px;width:400px;text-align:right;top:35.2px;font-size:24px;line-height:28.8px;color:#242424"><span class="nr">21.74%</span></div>
<div class="t R" style="left:752.6px;width:400px;text-align:right;top:35.2px;font-size:24px;line-height:28.8px;color:#242424"><span class="nr">30.00%</span></div>
<div class="t R" style="left:933.6px;width:400px;text-align:right;top:35.2px;font-size:24px;line-height:28.8px;color:#242424"><span class="nr">1</span></div>
<div class="t R" style="left:1023.6px;width:400px;text-align:right;top:35.2px;font-size:24px;line-height:28.8px;color:#242424"><span class="nr">30</span></div>
<div class="t R" style="left:1113.4px;width:400px;text-align:right;top:35.2px;font-size:24px;line-height:28.8px;color:#242424"><span class="nr">43.48%</span></div>
<div class="t R" style="left:1113.4px;width:400px;text-align:right;top:67.2px;font-size:24px;line-height:28.8px;color:#242424"><span class="nr">15.94%</span></div>
<div class="t R" style="left:1113.4px;width:400px;text-align:right;top:99.2px;font-size:24px;line-height:28.8px;color:#242424"><span class="nr">8.70%</span></div>
<div class="t R" style="left:1113.4px;width:400px;text-align:right;top:131.2px;font-size:24px;line-height:28.8px;color:#242424"><span class="nr">7.25%</span></div>
<div class="t R" style="left:1113.4px;width:400px;text-align:right;top:163.2px;font-size:24px;line-height:28.8px;color:#242424"><span class="nr">5.80%</span></div>
<div class="t R" style="left:1113.4px;width:400px;text-align:right;top:195.2px;font-size:24px;line-height:28.8px;color:#242424"><span class="nr">4.35%</span></div>
<div class="t R" style="left:1113.4px;width:400px;text-align:right;top:227.2px;font-size:24px;line-height:28.8px;color:#242424"><span class="nr">5.80%</span></div>
<div class="t R" style="left:1113.4px;width:400px;text-align:right;top:259.2px;font-size:24px;line-height:28.8px;color:#242424"><span class="nr">4.35%</span></div>
<div class="t R" style="left:1113.4px;width:400px;text-align:right;top:291.2px;font-size:24px;line-height:28.8px;color:#242424"><span class="nr">4.35%</span></div>
<div class="a" style="left:365px;top:52px;width:541.5px;height:452.4px;background:#fff;box-sizing:border-box;border:2px solid #b4b4b4;"></div>
<svg class="a" style="left:365px;top:52px" width="541.5" height="452.4"><path d="M44.6 408.0H518.4" stroke="#d9d9d9" stroke-width="1.3"/><path d="M44.6 365.88H518.4" stroke="#d9d9d9" stroke-width="1.3"/><path d="M44.6 323.76H518.4" stroke="#d9d9d9" stroke-width="1.3"/><path d="M44.6 281.64H518.4" stroke="#d9d9d9" stroke-width="1.3"/><path d="M44.6 239.52H518.4" stroke="#d9d9d9" stroke-width="1.3"/><path d="M44.6 197.4H518.4" stroke="#d9d9d9" stroke-width="1.3"/><path d="M44.6 155.28H518.4" stroke="#d9d9d9" stroke-width="1.3"/><path d="M44.6 113.16H518.4" stroke="#d9d9d9" stroke-width="1.3"/><path d="M44.6 71.04H518.4" stroke="#d9d9d9" stroke-width="1.3"/><rect x="62.52" y="92.1" width="16.8" height="315.6" fill="#4472c4"/><rect x="115.17" y="239.52" width="16.8" height="168.18" fill="#4472c4"/><rect x="167.81" y="323.76" width="16.8" height="83.94" fill="#4472c4"/><rect x="220.46" y="113.16" width="16.8" height="294.54" fill="#4472c4"/><rect x="273.1" y="281.64" width="16.8" height="126.06" fill="#4472c4"/><rect x="325.74" y="281.64" width="16.8" height="126.06" fill="#4472c4"/><rect x="378.39" y="302.7" width="16.8" height="105.0" fill="#4472c4"/><rect x="431.03" y="281.64" width="16.8" height="126.06" fill="#4472c4"/><rect x="483.68" y="302.7" width="16.8" height="105.0" fill="#4472c4"/></svg>
<div class="t S" style="left:333.4px;width:60px;text-align:right;top:450.55px;font-size:15px;line-height:18px;color:#595959">0</div>
<div class="t S" style="left:333.4px;width:60px;text-align:right;top:408.43px;font-size:15px;line-height:18px;color:#595959">2</div>
<div class="t S" style="left:333.4px;width:60px;text-align:right;top:366.31px;font-size:15px;line-height:18px;color:#595959">4</div>
<div class="t S" style="left:333.4px;width:60px;text-align:right;top:324.19px;font-size:15px;line-height:18px;color:#595959">6</div>
<div class="t S" style="left:333.4px;width:60px;text-align:right;top:282.07px;font-size:15px;line-height:18px;color:#595959">8</div>
<div class="t S" style="left:333.4px;width:60px;text-align:right;top:239.95px;font-size:15px;line-height:18px;color:#595959">10</div>
<div class="t S" style="left:333.4px;width:60px;text-align:right;top:197.83px;font-size:15px;line-height:18px;color:#595959">12</div>
<div class="t S" style="left:333.4px;width:60px;text-align:right;top:155.71px;font-size:15px;line-height:18px;color:#595959">14</div>
<div class="t S" style="left:333.4px;width:60px;text-align:right;top:113.59px;font-size:15px;line-height:18px;color:#595959">16</div>
<div class="t S" style="left:415.92px;width:40px;text-align:center;top:472.15px;font-size:15px;line-height:18px;color:#595959">1</div>
<div class="t S" style="left:468.57px;width:40px;text-align:center;top:472.15px;font-size:15px;line-height:18px;color:#595959">2</div>
<div class="t S" style="left:521.21px;width:40px;text-align:center;top:472.15px;font-size:15px;line-height:18px;color:#595959">3</div>
<div class="t S" style="left:573.86px;width:40px;text-align:center;top:472.15px;font-size:15px;line-height:18px;color:#595959">4</div>
<div class="t S" style="left:626.5px;width:40px;text-align:center;top:472.15px;font-size:15px;line-height:18px;color:#595959">5</div>
<div class="t S" style="left:679.14px;width:40px;text-align:center;top:472.15px;font-size:15px;line-height:18px;color:#595959">6</div>
<div class="t S" style="left:731.79px;width:40px;text-align:center;top:472.15px;font-size:15px;line-height:18px;color:#595959">7</div>
<div class="t S" style="left:784.43px;width:40px;text-align:center;top:472.15px;font-size:15px;line-height:18px;color:#595959">8</div>
<div class="t S" style="left:837.08px;width:40px;text-align:center;top:472.15px;font-size:15px;line-height:18px;color:#595959">9</div>
<div class="t R" style="left:534.2px;width:200px;text-align:center;top:68.43px;font-size:26px;line-height:31.2px;color:#595959">拜登</div>
<div class="a" style="left:919px;top:53.6px;width:521px;height:442.4px;background:#fff;box-sizing:border-box;border:1px solid #d6d6d6;box-shadow:0 0 3px rgba(0,0,0,.10);"></div>
<svg class="a" style="left:919px;top:53.6px" width="521" height="442.4"><path d="M44.3 398.2H499.7" stroke="#d9d9d9" stroke-width="1.3"/><path d="M44.3 351.65H499.7" stroke="#d9d9d9" stroke-width="1.3"/><path d="M44.3 305.1H499.7" stroke="#d9d9d9" stroke-width="1.3"/><path d="M44.3 258.55H499.7" stroke="#d9d9d9" stroke-width="1.3"/><path d="M44.3 212.0H499.7" stroke="#d9d9d9" stroke-width="1.3"/><path d="M44.3 165.45H499.7" stroke="#d9d9d9" stroke-width="1.3"/><path d="M44.3 118.9H499.7" stroke="#d9d9d9" stroke-width="1.3"/><path d="M44.3 72.35H499.7" stroke="#d9d9d9" stroke-width="1.3"/><rect x="61.65" y="118.9" width="15.9" height="279.0" fill="#4472c4"/><rect x="112.25" y="295.79" width="15.9" height="102.11" fill="#4472c4"/><rect x="162.85" y="342.34" width="15.9" height="55.56" fill="#4472c4"/><rect x="213.45" y="351.65" width="15.9" height="46.25" fill="#4472c4"/><rect x="264.05" y="360.96" width="15.9" height="36.94" fill="#4472c4"/><rect x="314.65" y="370.27" width="15.9" height="27.63" fill="#4472c4"/><rect x="365.25" y="360.96" width="15.9" height="36.94" fill="#4472c4"/><rect x="415.85" y="370.27" width="15.9" height="27.63" fill="#4472c4"/><rect x="466.45" y="370.27" width="15.9" height="27.63" fill="#4472c4"/></svg>
<div class="t S" style="left:888.4px;width:60px;text-align:right;top:442.35px;font-size:15px;line-height:18px;color:#595959">0</div>
<div class="t S" style="left:888.4px;width:60px;text-align:right;top:395.8px;font-size:15px;line-height:18px;color:#595959">5</div>
<div class="t S" style="left:888.4px;width:60px;text-align:right;top:349.25px;font-size:15px;line-height:18px;color:#595959">10</div>
<div class="t S" style="left:888.4px;width:60px;text-align:right;top:302.7px;font-size:15px;line-height:18px;color:#595959">15</div>
<div class="t S" style="left:888.4px;width:60px;text-align:right;top:256.15px;font-size:15px;line-height:18px;color:#595959">20</div>
<div class="t S" style="left:888.4px;width:60px;text-align:right;top:209.6px;font-size:15px;line-height:18px;color:#595959">25</div>
<div class="t S" style="left:888.4px;width:60px;text-align:right;top:163.05px;font-size:15px;line-height:18px;color:#595959">30</div>
<div class="t S" style="left:888.4px;width:60px;text-align:right;top:116.5px;font-size:15px;line-height:18px;color:#595959">35</div>
<div class="t S" style="left:968.6px;width:40px;text-align:center;top:464.55px;font-size:15px;line-height:18px;color:#595959">1</div>
<div class="t S" style="left:1019.2px;width:40px;text-align:center;top:464.55px;font-size:15px;line-height:18px;color:#595959">2</div>
<div class="t S" style="left:1069.8px;width:40px;text-align:center;top:464.55px;font-size:15px;line-height:18px;color:#595959">3</div>
<div class="t S" style="left:1120.4px;width:40px;text-align:center;top:464.55px;font-size:15px;line-height:18px;color:#595959">4</div>
<div class="t S" style="left:1171.0px;width:40px;text-align:center;top:464.55px;font-size:15px;line-height:18px;color:#595959">5</div>
<div class="t S" style="left:1221.6px;width:40px;text-align:center;top:464.55px;font-size:15px;line-height:18px;color:#595959">6</div>
<div class="t S" style="left:1272.2px;width:40px;text-align:center;top:464.55px;font-size:15px;line-height:18px;color:#595959">7</div>
<div class="t S" style="left:1322.8px;width:40px;text-align:center;top:464.55px;font-size:15px;line-height:18px;color:#595959">8</div>
<div class="t S" style="left:1373.4px;width:40px;text-align:center;top:464.55px;font-size:15px;line-height:18px;color:#595959">9</div>
<div class="t R" style="left:1078.8px;width:200px;text-align:center;top:71.33px;font-size:26px;line-height:31.2px;color:#595959">川普</div>
<div class="a" style="left:358.0px;top:45.0px;width:15.6px;height:15.6px;box-sizing:border-box;border:2.3px solid #8c8c8c;border-radius:50%;background:#fff"></div>
<div class="a" style="left:627.9px;top:45.0px;width:15.6px;height:15.6px;box-sizing:border-box;border:2.3px solid #8c8c8c;border-radius:50%;background:#fff"></div>
<div class="a" style="left:897.8px;top:45.0px;width:15.6px;height:15.6px;box-sizing:border-box;border:2.3px solid #8c8c8c;border-radius:50%;background:#fff"></div>
<div class="a" style="left:358.0px;top:270.6px;width:15.6px;height:15.6px;box-sizing:border-box;border:2.3px solid #8c8c8c;border-radius:50%;background:#fff"></div>
<div class="a" style="left:897.8px;top:270.6px;width:15.6px;height:15.6px;box-sizing:border-box;border:2.3px solid #8c8c8c;border-radius:50%;background:#fff"></div>
<div class="a" style="left:358.0px;top:496.4px;width:15.6px;height:15.6px;box-sizing:border-box;border:2.3px solid #8c8c8c;border-radius:50%;background:#fff"></div>
<div class="a" style="left:627.9px;top:496.4px;width:15.6px;height:15.6px;box-sizing:border-box;border:2.3px solid #8c8c8c;border-radius:50%;background:#fff"></div>
<div class="a" style="left:897.8px;top:496.4px;width:15.6px;height:15.6px;box-sizing:border-box;border:2.3px solid #8c8c8c;border-radius:50%;background:#fff"></div>
<div class="a" style="left:921px;top:52px;width:40px;height:39px;box-sizing:border-box;border:1.2px solid #c3c3c3;background:#fff"></div>
<div class="a" style="left:921px;top:105px;width:40px;height:39px;box-sizing:border-box;border:1.2px solid #c3c3c3;background:#fff"></div>
<div class="a" style="left:921px;top:159px;width:40px;height:39px;box-sizing:border-box;border:1.2px solid #c3c3c3;background:#fff"></div>
<svg class="a" style="left:921.2px;top:52.3px" width="40" height="39"><path d="M16.2 9.600h5.200v7h7v5.200h-7v7h-5.200v-7h-7v-5.200h7z" fill="#70a88b"/></svg>
<svg class="a" style="left:921.2px;top:105.6px" width="40" height="39"><path d="M30.600 7.200v8.600l-6.600 5l-2.800-3.400z" fill="#6b6b6b"/><path d="M20.600 18.200l2.800 3.400l-2 1.600l-2.800-3.400z" fill="#8a8a8a"/><path d="M17.800 20.800c3 0.400 4.400 2.800 3.600 5.200c-1.200 3.400-7 4.200-14.400 3.800c3-1.400 4.400-3 5.600-5.400c1-2 2.800-3.600 5.200-3.600z" fill="#4f81bd"/><path d="M15.600 23.600c1.600-0.600 3 0.400 3.400 2" stroke="#fff" stroke-width="1.400" fill="none"/></svg>
<svg class="a" style="left:921.2px;top:159.1px" width="40" height="39"><path d="M5.400 8h28.200l-11.200 13v13.200h-5.600v-13.200z" fill="#7f7f7f"/><path d="M8.400 9.800l9.800 11v12" stroke="#fff" stroke-width="1.100" fill="none"/></svg>
</div>
<div class="a" style="left:0px;top:887px;width:1510px;height:23px;background:#e6e6e6;"></div>
<div class="a" style="left:0px;top:886.5px;width:1510px;height:1px;background:#ababab;"></div>
<svg class="a" style="left:5.5px;top:894px" width="6" height="12" viewBox="0 0 6 12"><path d="M5.600 0.600v10.800l-5-5.400z" fill="#c6c6c6"/></svg>
<svg class="a" style="left:35px;top:894px" width="6" height="12" viewBox="0 0 6 12"><path d="M0.400 0.600v10.800l5-5.400z" fill="#c6c6c6"/></svg>
<div class="a" style="left:81.2px;top:889px;width:1px;height:21px;background:#ababab;"></div>
<div class="t S" style="left:93.2px;top:887.82px;font-size:18px;line-height:21.6px;color:#444;">工作表1</div>
<div class="a" style="left:172.8px;top:886px;width:114.8px;height:24px;background:#fff;"></div>
<div class="a" style="left:172.8px;top:887px;width:1px;height:23px;background:#ababab;"></div>
<div class="a" style="left:287px;top:887px;width:1px;height:23px;background:#ababab;"></div>
<div class="t S" style="left:184.2px;top:887.59px;font-size:18.4px;line-height:22.08px;color:#217346;">取出第一位</div>
<svg class="a" style="left:320px;top:890px" width="22" height="22" viewBox="0 0 22 22"><circle cx="11" cy="11" r="9.600" fill="none" stroke="#6a6a6a" stroke-width="1.300"/><path d="M11 6v10M6 11h10" stroke="#6a6a6a" stroke-width="1.300"/></svg>
<div class="a" style="left:1057.4px;top:893.4px;width:2.2px;height:2.2px;background:#a9a9a9;"></div>
<div class="a" style="left:1057.4px;top:899.4px;width:2.2px;height:2.2px;background:#a9a9a9;"></div>
<div class="a" style="left:1057.4px;top:905.4px;width:2.2px;height:2.2px;background:#a9a9a9;"></div>
<div class="a" style="left:1075px;top:889.5px;width:22.6px;height:21px;background:#fff;box-sizing:border-box;border:1px solid #ababab"></div>
<svg class="a" style="left:1082px;top:894px" width="8" height="13" viewBox="0 0 8 13"><path d="M6.600 0.800v11l-5.800-5.500z" fill="#5a5a5a"/></svg>
<div class="a" style="left:1098.4px;top:889.5px;width:420px;height:21px;background:#fff;box-sizing:border-box;border:1px solid #ababab"></div>
</div>
</body></html>
